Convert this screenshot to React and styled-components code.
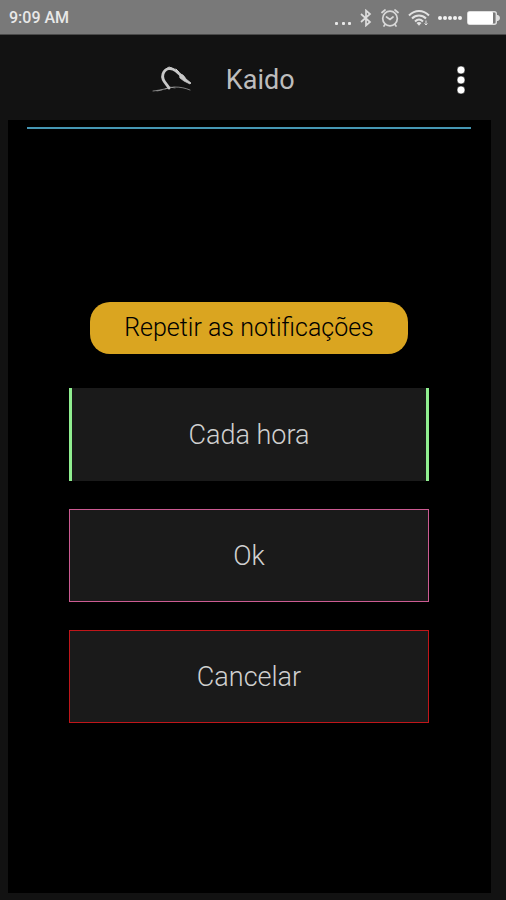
import styled, { createGlobalStyle, ThemeProvider } from 'styled-components';

const theme = {
  colors: {
    status: '#797979',
    frame: '#121212',
    panel: '#000000',
    surface: '#1a1a1a',
    text: '#bdbdbd',
    line: '#4596b3',
    gold: '#daa520',
    green: '#90ee90',
    pink: '#cc5b92',
    red: '#c0161a',
  },
};

const GlobalStyle = createGlobalStyle`
  * {
    box-sizing: border-box;
  }

  body {
    margin: 0;
    background-color: #121212;
    font-family: Roboto, sans-serif;
  }
`;

const Screen = styled.div`
  min-height: 100vh;
  display: flex;
  flex-direction: column;
  background-color: ${props => props.theme.colors.frame};
`;

const StatusBar = styled.div`
  height: 35px;
  padding: 2px 6px 0 9px;
  display: flex;
  justify-content: space-between;
  align-items: center;
  background-color: ${props => props.theme.colors.status};
  border-bottom: 1px solid #4a4a4a;
`;

const Clock = styled.time`
  font-size: 16px;
  font-weight: 500;
  line-height: 20px;
  color: #e8e8e8;
`;

const StatusIcons = styled.div`
  display: flex;
  align-items: center;
  gap: 8px;

  svg {
    display: block;
  }
`;

const PowerIcons = styled.div`
  display: flex;
  align-items: center;
  gap: 4px;
`;

const Header = styled.header`
  height: 85px;
  padding: 4px 32px 0 30%;
  display: flex;
  align-items: center;
`;

const AppTitle = styled.h1`
  margin: 0 auto 0 32px;
  font-size: 27px;
  font-weight: 400;
  line-height: 32px;
  color: ${props => props.theme.colors.text};
`;

const MenuButton = styled.button`
  width: 26px;
  height: 40px;
  padding: 0;
  border: none;
  background: none;
  cursor: pointer;

  svg {
    display: block;
    margin: 0 auto;
  }
`;

const Panel = styled.main`
  flex: 1;
  margin: 0 15px 7px 8px;
  padding: 7px 20px 0 19px;
  display: flex;
  flex-direction: column;
  background-color: ${props => props.theme.colors.panel};
`;

const Divider = styled.hr`
  width: 100%;
  height: 2px;
  margin: 0;
  border: none;
  background-color: ${props => props.theme.colors.line};
`;

const Options = styled.section`
  flex: 1;
  padding: 26px 42px 24px;
  display: flex;
  flex-direction: column;
  justify-content: center;
  gap: 28px;
`;

const Caption = styled.h2`
  margin: 0 21px 6px;
  padding: 13px 0;
  border-radius: 20px;
  background-color: ${props => props.theme.colors.gold};
  font-size: 25px;
  font-weight: 300;
  line-height: 26px;
  text-align: center;
  color: #000000;
`;

const OptionButton = styled.button`
  width: 100%;
  height: 93px;
  padding: 2px 0 0;
  border-style: solid;
  border-width: ${props => props.$sides ? '0 3px' : '1px'};
  border-color: ${props => props.theme.colors[props.$color]};
  background-color: ${props => props.theme.colors.surface};
  font-family: inherit;
  font-size: 27px;
  font-weight: 300;
  line-height: 32px;
  color: #d0d0d0;
  cursor: pointer;
`;

const Logo = () => (
  <svg width="42" height="32" viewBox="0 0 42 32" fill="none" stroke="#c8c8c8" strokeLinecap="round" strokeLinejoin="round">
    <path d="M17 24 C14 19 9 16 11 10 C13 4 19 3 24 7 L32 14" strokeWidth="2.8" />
    <path d="M28 10 L31 11 L34 15 L39 19 L38 20 L32 17 L28 14 Z" fill="#c8c8c8" strokeWidth="0.8" />
    <path d="M14 5 L17 3 L20 4 M24 5 L27 8" strokeWidth="1" />
    <path d="M1 27 C10 26 16 24 22 23 C29 23 33 24 38 26" strokeWidth="1" opacity="0.6" />
    <path d="M5 27 L10 26 M13 25 L18 23 L23 24" strokeWidth="0.8" opacity="0.6" />
  </svg>
);

const More = () => (
  <svg width="17" height="18" viewBox="0 0 17 18" fill="#e8e8e8">
    <rect x="0" y="13" width="3" height="3" rx="1" />
    <rect x="7" y="13" width="3" height="3" rx="1" />
    <rect x="13" y="13" width="3" height="3" rx="1" />
  </svg>
);

const Bluetooth = () => (
  <svg width="12" height="18" viewBox="0 0 12 18" fill="none" stroke="#dcdcdc" strokeWidth="1.7">
    <path d="M1 5 L10 13 L6 16.5 V1.5 L10 5 L1 13" />
  </svg>
);

const Alarm = () => (
  <svg width="20" height="18" viewBox="0 0 20 18" fill="none" stroke="#d8d8d8" strokeWidth="1.7" strokeLinecap="round">
    <circle cx="10" cy="9.5" r="7.3" />
    <path d="M6.5 8 L10 10.5 L13 8 M2 3.5 L5 1 M15 1 L18 3.5 M5 15.5 L4 17 M15 15.5 L16 17" />
  </svg>
);

const Wifi = () => (
  <svg width="22" height="18" viewBox="0 0 22 18" fill="none" stroke="#e2e2e2" strokeWidth="2">
    <path d="M1 6.5 C7 0.5 15 0.5 21 6.5 M4 9.5 C8 5.5 14 5.5 18 9.5 M7 12.5 C9.5 10 12.5 10 15 12.5" />
    <path d="M8.5 14 L11 16.8 L13.5 14 C12 12.7 10 12.7 8.5 14 Z" fill="#e2e2e2" stroke="none" />
    <path d="M18 11.5 V16 M16.5 14.5 L18 16 L19.5 14.5" strokeWidth="1" />
  </svg>
);

const Signal = () => (
  <svg width="25" height="4" viewBox="0 0 25 4" fill="#f2f2f2">
    {[2, 7, 12, 17, 22].map(x => <circle key={x} cx={x} cy="2" r="2" />)}
  </svg>
);

const Battery = () => (
  <svg width="33" height="14" viewBox="0 0 33 14">
    <rect x="0.7" y="0.7" width="28.6" height="12.6" rx="2" fill="none" stroke="#dedede" strokeWidth="1.4" />
    <rect x="1" y="1" width="25" height="12" rx="1" fill="#ffffff" />
    <path d="M30 4 H31 Q33 5 33 7 Q33 9 31 10 H30 Z" fill="#dedede" />
  </svg>
);

const App = () => {
  return (
    <ThemeProvider theme={theme}>
      <GlobalStyle />
      <Screen>
        <StatusBar>
          <Clock>9:09 AM</Clock>
          <StatusIcons>
            <More />
            <Bluetooth />
            <Alarm />
            <Wifi />
            <PowerIcons>
              <Signal />
              <Battery />
            </PowerIcons>
          </StatusIcons>
        </StatusBar>

        <Header>
          <Logo />
          <AppTitle>Kaido</AppTitle>
          <MenuButton type="button" aria-label="Menu">
            <svg width="10" height="30" viewBox="0 0 10 30" fill="#ffffff" stroke="#000000" strokeWidth="0.5">
              <circle cx="5" cy="5" r="4" />
              <circle cx="5" cy="15" r="4" />
              <circle cx="5" cy="25" r="4" />
            </svg>
          </MenuButton>
        </Header>

        <Panel>
          <Divider />
          <Options>
            <Caption>Repetir as notificações</Caption>
            <OptionButton type="button" $color="green" $sides>Cada hora</OptionButton>
            <OptionButton type="button" $color="pink">Ok</OptionButton>
            <OptionButton type="button" $color="red">Cancelar</OptionButton>
          </Options>
        </Panel>
      </Screen>
    </ThemeProvider>
  );
};

export default App;
